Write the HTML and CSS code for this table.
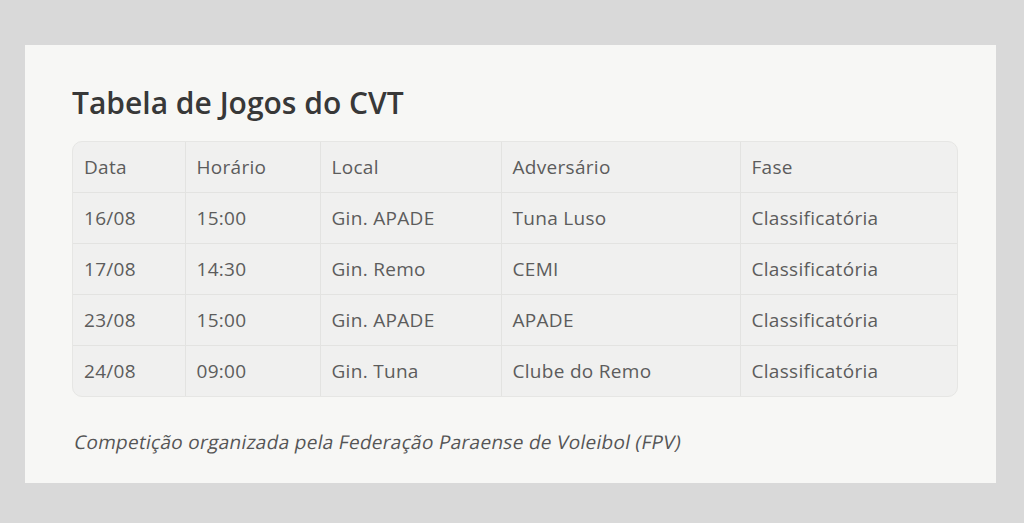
FILE: index.html
```html
<!DOCTYPE html>
<html lang="pt-BR">
<head>
    <meta charset="UTF-8">
    <meta name="viewport" content="width=device-width, initial-scale=1.0">
    <title>Tabela de Jogos do CVT</title>
    <link rel="stylesheet" href="styles.css">
</head>
<body>
    <div class="card">
        <h1>Tabela de Jogos do CVT</h1>

        <!-- Tabela -->
        <div class="table-wrap">
            <table class="games">
                <colgroup>
                    <col class="c-data">
                    <col class="c-hora">
                    <col class="c-local">
                    <col class="c-adv">
                    <col class="c-fase">
                </colgroup>
                <thead>
                    <tr>
                        <th>Data</th>
                        <th>Horário</th>
                        <th>Local</th>
                        <th>Adversário</th>
                        <th>Fase</th>
                    </tr>
                </thead>
                <tbody>
                    <tr>
                        <td>16/08</td>
                        <td>15:00</td>
                        <td>Gin. APADE</td>
                        <td>Tuna Luso</td>
                        <td>Classificatória</td>
                    </tr>
                    <tr>
                        <td>17/08</td>
                        <td>14:30</td>
                        <td>Gin. Remo</td>
                        <td>CEMI</td>
                        <td>Classificatória</td>
                    </tr>
                    <tr>
                        <td>23/08</td>
                        <td>15:00</td>
                        <td>Gin. APADE</td>
                        <td>APADE</td>
                        <td>Classificatória</td>
                    </tr>
                    <tr>
                        <td>24/08</td>
                        <td>09:00</td>
                        <td>Gin. Tuna</td>
                        <td>Clube do Remo</td>
                        <td>Classificatória</td>
                    </tr>
                </tbody>
            </table>
        </div>

        <p class="note"><span>Competição organizada pela Federação Paraense de Voleibol (FPV)</span></p>
    </div>
</body>
</html>
```

FILE: styles.css
```css
/* Global */
body {
    margin: 0;
    padding: 45px 28px 40px 25px;
    background-color: #d9d9d9;
    font-family: "Open Sans", Lato, sans-serif;
    color: #555;
}

/* Card */
.card {
    background-color: #f7f7f5;
    padding: 38px 38px 28px 47px;
}

h1 {
    margin: 0 0 18px;
    font-size: 30px;
    line-height: 40px;
    font-weight: 600;
    color: #383838;
}

/* Table */
.table-wrap {
    border: 1px solid #e6e6e4;
    border-radius: 10px;
    overflow: hidden;
    background-color: #f0f0ef;
}

.games {
    width: 100%;
    border-collapse: collapse;
    table-layout: fixed;
    font-size: 19px;
    letter-spacing: 0.3px;
}

.c-data { width: 112px; }
.c-hora { width: 135px; }
.c-local { width: 181px; }
.c-adv { width: 239px; }

.games th,
.games td {
    height: 50px;
    padding: 0 11px;
    text-align: left;
    font-weight: normal;
    color: #5c5c5c;
    border-right: 1px solid #e3e3e1;
    border-top: 1px solid #e3e3e1;
}

.games th:last-child,
.games td:last-child {
    border-right: none;
}

.games thead th {
    border-top: none;
}

/* Note: slanted upright face, like the original */
.note {
    margin: 32px 0 0;
    font-size: 19px;
    line-height: 26px;
    letter-spacing: 0.3px;
    color: #555;
}

.note span {
    display: inline-block;
    transform: skewX(-11deg);
    transform-origin: left bottom;
}
```
